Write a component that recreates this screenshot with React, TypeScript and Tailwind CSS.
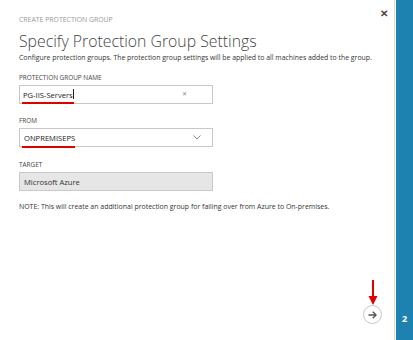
import React from 'react';

const Label = ({ children }: { children: React.ReactNode }) => (
  <div className="text-[6.4px] leading-[10px] text-[#444] uppercase">{children}</div>
);

const App = () => {
  return (
    <div className="flex h-[340px] w-[413px] bg-white font-['Open_Sans',sans-serif] text-[#333]">
      <div className="relative flex flex-1 flex-col pl-[19px] pr-[6px]">
        <div className="flex items-start justify-between pt-[7px]">
          <div className="pt-[8px] text-[6.9px] leading-[10px] text-[#999]">CREATE PROTECTION GROUP</div>
          <span className="text-[10px] font-bold leading-[12px] text-[#444]">✕</span>
        </div>
        <h1 className="mt-[6px] text-[15.8px] font-light leading-[20px] text-[#444]">Specify Protection Group Settings</h1>
        <p className="mt-[1px] text-[6.9px] leading-[11px] text-[#333]">
          Configure protection groups. The protection group settings will be applied to all machines added to the group.
        </p>

        <div className="mt-[10px]">
          <Label>Protection Group Name</Label>
          <div className="relative mt-[2px] flex h-[19px] w-[194px] items-center justify-between border border-[#c8c8c8] pl-[3px] pr-[25px]">
            <span className="text-[7.6px] leading-[12px] text-[#222]">
              PG-IIS-Servers<span className="ml-[0.5px] inline-block h-[10px] w-px translate-y-[1px] bg-[#222]" />
            </span>
            <span className="text-[6px] text-[#888]">✕</span>
            <div className="absolute left-[2px] top-[16px] h-[2px] w-[52px] bg-[#e00000]" />
          </div>
        </div>

        <div className="mt-[12px]">
          <Label>From</Label>
          <div className="relative mt-[2px] flex h-[19px] w-[194px] items-center justify-between border border-[#c8c8c8] pl-[4px] pr-[11px]">
            <span className="text-[7.6px] leading-[12px] text-[#222]">ONPREMISEPS</span>
            <svg width="8" height="5" viewBox="0 0 8 5" fill="none" stroke="#888" strokeWidth="1">
              <path d="M0.5 0.5 L4 4 L7.5 0.5" />
            </svg>
            <div className="absolute left-[2px] top-[17px] h-[2px] w-[53px] bg-[#e00000]" />
          </div>
        </div>

        <div className="mt-[13px]">
          <Label>Target</Label>
          <div className="mt-[2px] flex h-[19px] w-[194px] items-center border border-[#c8c8c8] bg-[#e6e6e6] pl-[4px]">
            <span className="text-[7.6px] leading-[12px] text-[#333]">Microsoft Azure</span>
          </div>
        </div>

        <p className="mt-[10px] text-[6.95px] leading-[11px] text-[#333]">
          NOTE: This will create an additional protection group for failing over from Azure to On-premises.
        </p>

        <div className="mt-auto flex justify-end pb-[16px] pr-[6px]">
          <div className="relative flex h-[19px] w-[19px] items-center justify-center rounded-full border-[1.5px] border-[#c8c8c8]">
            <svg width="9" height="8" viewBox="0 0 9 8" fill="none" stroke="#555" strokeWidth="1.4">
              <path d="M0.5 4 H8 M4.8 0.8 L8 4 L4.8 7.2" />
            </svg>
            <svg className="absolute bottom-[17px] left-[4px]" width="10" height="26" viewBox="0 0 10 26">
              <rect x="4" y="0" width="2" height="18" fill="#e00000" />
              <path d="M0.5 16 L5 25 L9.5 16 Z" fill="#e00000" />
            </svg>
          </div>
        </div>
      </div>
      <div className="w-px bg-[#dcdcdc]" />
      <div className="ml-[1px] flex w-[17px] flex-col items-center justify-end bg-[#1d82b0] pb-[15px]">
        <span className="text-[9px] font-bold leading-[12px] text-white">2</span>
      </div>
    </div>
  );
};

export default App;
